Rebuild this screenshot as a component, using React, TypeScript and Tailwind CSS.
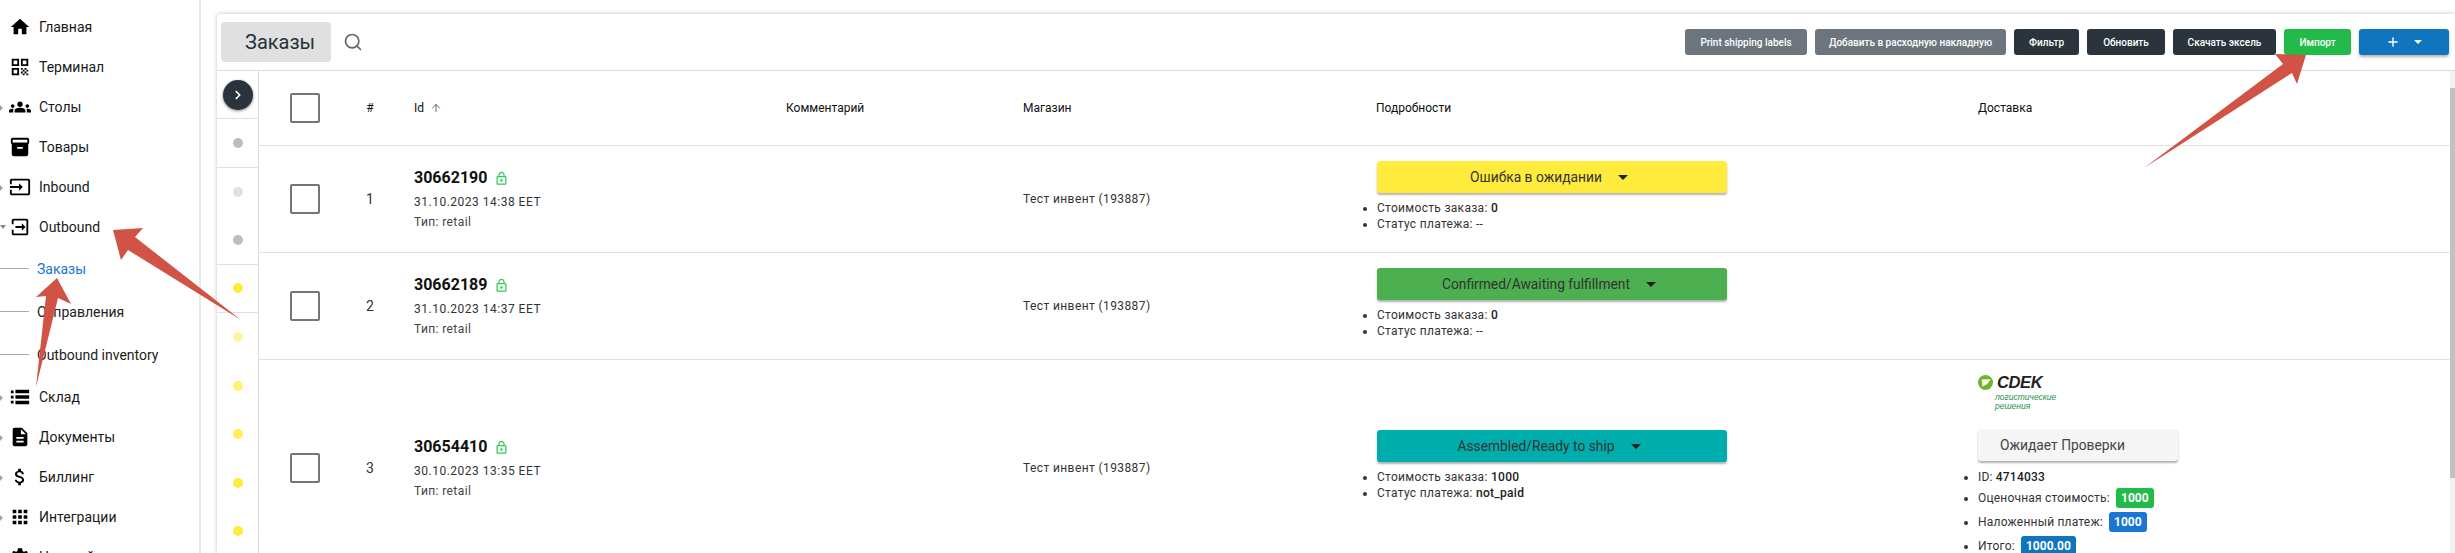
import { ArrowUp, ChevronRight, Search, Plus } from "lucide-react";
import type { ReactNode } from "react";

// иконки бокового меню
function Ico({ d }: { d: string }) {
  return (
    <svg viewBox="0 0 24 24" className="h-[22px] w-[22px] fill-black">
      <path d={d} />
    </svg>
  );
}

const icons = {
  home: "M10 20v-6h4v6h5v-8h3L12 3 2 12h3v8z",
  qr: "M3 11h8V3H3v8zm2-6h4v4H5V5zM3 21h8v-8H3v8zm2-6h4v4H5v-4zM13 3v8h8V3h-8zm6 6h-4V5h4v4zM13 13h2v2h-2zM15 15h2v2h-2zM13 17h2v2h-2zM15 19h2v2h-2zM17 17h2v2h-2zM19 19h2v2h-2zM17 13h2v2h-2zM19 15h2v2h-2z",
  groups: "M4 13c1.1 0 2-.9 2-2s-.9-2-2-2-2 .9-2 2 .9 2 2 2zm1.13 1.1C4.76 14.04 4.39 14 4 14c-.99 0-1.93.21-2.78.58C.48 14.9 0 15.62 0 16.43V18h4.5v-1.61c0-.83.23-1.61.63-2.29zM20 13c1.1 0 2-.9 2-2s-.9-2-2-2-2 .9-2 2 .9 2 2 2zm4 3.43c0-.81-.48-1.53-1.22-1.85C21.93 14.21 20.99 14 20 14c-.39 0-.76.04-1.13.1.4.68.63 1.46.63 2.29V18H24v-1.57zM16.24 13.65c-1.17-.52-2.61-.9-4.24-.9s-3.07.39-4.24.9C6.68 14.13 6 15.21 6 16.39V18h12v-1.61c0-1.18-.68-2.26-1.76-2.74zM12 12c1.66 0 3-1.34 3-3s-1.34-3-3-3-3 1.34-3 3 1.34 3 3 3z",
  archive: "M20 2H4c-1 0-2 .9-2 2v3.01c0 .72.43 1.34 1 1.69V20c0 1.1 1.1 2 2 2h14c.9 0 2-.9 2-2V8.7c.57-.35 1-.97 1-1.69V4c0-1.1-1-2-2-2zm-5 12H9v-2h6v2zm5-7H4V4h16v3z",
  login: "M21 3.01H3c-1.1 0-2 .9-2 2V9h2V4.99h18v14.03H3V15H1v4.01c0 1.1.9 1.98 2 1.98h18c1.1 0 2-.88 2-1.98v-14c0-1.11-.9-2-2-2zM11 16l4-4-4-4v3H1v2h10v3z",
  logout: "M5 3h14c1.1 0 2 .9 2 2v14c0 1.1-.9 2-2 2H5c-1.1 0-2-.9-2-2v-4h2v4h14V5H5v4H3V5c0-1.1.9-2 2-2zm9 5l4 4-4 4v-3H7v-2h7V8z",
  list: "M2 5h3v3H2zM7 4h15v4H7zM2 10.5h3v3H2zM7 10h15v4H7zM2 16h3v3H2zM7 16h15v4H7z",
  doc: "M14 2H6c-1.1 0-1.99.9-1.99 2L4 20c0 1.1.89 2 1.99 2H18c1.1 0 2-.9 2-2V8l-6-6zm2 16H8v-2h8v2zm0-4H8v-2h8v2zm-3-5V3.5L18.5 9H13z",
  money: "M11.8 10.9c-2.27-.59-3-1.2-3-2.15 0-1.09 1.01-1.85 2.7-1.85 1.78 0 2.44.85 2.5 2.1h2.21c-.07-1.72-1.12-3.3-3.21-3.81V3h-3v2.16c-1.94.42-3.5 1.68-3.5 3.61 0 2.31 1.91 3.46 4.7 4.13 2.5.6 3 1.48 3 2.41 0 .69-.49 1.79-2.7 1.79-2.06 0-2.87-.92-2.98-2.1h-2.2c.12 2.19 1.76 3.42 3.68 3.83V21h3v-2.15c1.95-.37 3.5-1.5 3.5-3.55 0-2.84-2.43-3.81-4.7-4.4z",
  apps: "M4 8h4V4H4v4zm6 12h4v-4h-4v4zm-6 0h4v-4H4v4zm0-6h4v-4H4v4zm6 0h4v-4h-4v4zm6-10v4h4V4h-4zm-6 4h4V4h-4v4zm6 6h4v-4h-4v4zm0 6h4v-4h-4v4z",
  gear: "M19.14 12.94c.04-.3.06-.61.06-.94 0-.32-.02-.64-.07-.94l2.03-1.58c.18-.14.23-.41.12-.61l-1.92-3.32c-.12-.22-.37-.29-.59-.22l-2.39.96c-.5-.38-1.03-.7-1.62-.94l-.36-2.54c-.04-.24-.24-.41-.48-.41h-3.84c-.24 0-.43.17-.47.41l-.36 2.54c-.59.24-1.13.57-1.62.94l-2.39-.96c-.22-.08-.47 0-.59.22L2.74 8.87c-.12.21-.08.47.12.61l2.03 1.58c-.05.3-.09.63-.09.94s.02.64.07.94l-2.03 1.58c-.18.14-.23.41-.12.61l1.92 3.32c.12.22.37.29.59.22l2.39-.96c.5.38 1.03.7 1.62.94l.36 2.54c.05.24.24.41.48.41h3.84c.24 0 .44-.17.47-.41l.36-2.54c.59-.24 1.13-.56 1.62-.94l2.39.96c.22.08.47 0 .59-.22l1.92-3.32c.12-.22.07-.47-.12-.61l-2.01-1.58z",
};

const lockPath = "M18 8h-1V6c0-2.76-2.24-5-5-5S7 3.24 7 6v2H6c-1.1 0-2 .9-2 2v10c0 1.1.9 2 2 2h12c1.1 0 2-.9 2-2V10c0-1.1-.9-2-2-2zM9 6c0-1.66 1.34-3 3-3s3 1.34 3 3v2H9V6zm9 14H6V10h12v10zm-6-3c1.1 0 2-.9 2-2s-.9-2-2-2-2 .9-2 2 .9 2 2 2z";

const menuTop = [
  { label: "Главная", icon: icons.home, caret: false },
  { label: "Терминал", icon: icons.qr, caret: false },
  { label: "Столы", icon: icons.groups, caret: true },
  { label: "Товары", icon: icons.archive, caret: false },
  { label: "Inbound", icon: icons.login, caret: true },
];
const menuBottom = [
  { label: "Склад", icon: icons.list },
  { label: "Документы", icon: icons.doc },
  { label: "Биллинг", icon: icons.money },
  { label: "Интеграции", icon: icons.apps },
  { label: "Настройки", icon: icons.gear },
];

function MenuItem({ label, icon, caret, down }: { label: string; icon: string; caret?: boolean; down?: boolean }) {
  return (
    <div className="relative flex h-10 items-center pl-[9px]">
      {caret && <span className="absolute left-0 top-[18px] h-0 w-0 border-y-[3px] border-l-[3px] border-y-transparent border-l-[#9aa5b1]" />}
      {down && <span className="absolute left-0 top-[18px] h-0 w-0 border-x-[3px] border-t-[4px] border-x-transparent border-t-[#8a8a8a]" />}
      <Ico d={icon} />
      <span className="ml-[8px] text-sm text-[#1a1a1a]">{label}</span>
    </div>
  );
}

function SubItem({ label, active }: { label: string; active?: boolean }) {
  return (
    <div className="flex h-[43px] items-center">
      <span className="h-px w-[29px] bg-[#aaa]" />
      <span className={`ml-[8px] text-sm ${active ? "text-[#1976d2]" : "text-[#222]"}`}>{label}</span>
    </div>
  );
}

function TopBtn({ children, tone, w }: { children: ReactNode; tone: string; w: string }) {
  return (
    <button className={`flex h-[26px] items-center justify-center rounded-[3px] text-[10px] font-medium text-white ${tone} ${w}`}>
      {children}
    </button>
  );
}

function Check() {
  return <div className="h-[30px] w-[30px] rounded-[2px] border-2 border-[#757575]" />;
}

function StatusBtn({ label, tone }: { label: string; tone: string }) {
  return (
    <div className={`flex h-8 w-[350px] items-center justify-center gap-[16px] pr-[6px] rounded-[3px] text-[13.8px] text-[#333] shadow-[0_2px_2px_rgba(0,0,0,0.3)] ${tone}`}>
      <span>{label}</span>
      <span className="h-0 w-0 border-x-[5px] border-t-[5px] border-x-transparent border-t-[#222]" />
    </div>
  );
}

function Info({ cost, pay }: { cost: string; pay: string }) {
  return (
    <ul className="mt-[7px] list-disc pb-[5px] text-xs leading-4 tracking-[0.3px] text-[#333]">
      <li>Стоимость заказа: <b className="font-medium text-[#222]">{cost}</b></li>
      <li>Статус платежа: {pay === "--" ? pay : <b className="font-medium text-[#222]">{pay}</b>}</li>
    </ul>
  );
}

function OrderCell({ id, date }: { id: string; date: string }) {
  return (
    <div>
      <div className="flex items-center gap-[7px]">
        <span className="text-base font-bold leading-5 text-[#111]">{id}</span>
        <svg viewBox="0 0 24 24" className="h-[15px] w-[15px] fill-[#2ecc55]"><path d={lockPath} /></svg>
      </div>
      <div className="mt-[6px] text-xs leading-4 tracking-[0.5px] text-[#333]">{date}</div>
      <div className="mt-1 text-xs leading-4 tracking-[0.4px] text-[#444]">Тип: retail</div>
    </div>
  );
}

function Row({ n, id, date, h, status, children }: { n: number; id: string; date: string; h: string; status: ReactNode; children?: ReactNode }) {
  return (
    <div className={`flex items-center border-b border-[#e0e0e0] ${h}`}>
      <div className="w-[91px] pl-[31px]"><Check /></div>
      <div className="w-[40px] text-center text-sm text-[#333]">{n}</div>
      <div className="w-[396px] pl-[24px]"><OrderCell id={id} date={date} /></div>
      <div className="w-[237px]" />
      <div className="w-[353px] text-xs tracking-[0.4px] text-[#333]">Тест инвент (193887)</div>
      <div className="w-[602px] pl-px">{status}</div>
      <div className="min-w-0 flex-1 self-start">{children}</div>
    </div>
  );
}

// логотип перевозчика
function CdekLogo() {
  return (
    <div className="h-[35px] w-[80px]">
      <div className="flex items-center gap-[4px]">
        <svg viewBox="0 0 16 16" className="h-[15px] w-[15px]">
          <circle cx="8" cy="8" r="8" fill="#6cb52d" />
          <path d="M4 4.5h9.5l-3.5 5-5.5 3z" fill="#f2f7e6" />
        </svg>
        <span className="font-['Liberation_Sans',sans-serif] text-[16.5px] leading-[15px] font-bold tracking-[-0.4px] text-[#222] italic">СDEK</span>
      </div>
      <div className="mt-[3px] pl-[17px] font-['Liberation_Sans',sans-serif] text-[8.5px] leading-[9px] text-[#1f8f4a] italic">
        <div>логистические</div>
        <div>решения</div>
      </div>
    </div>
  );
}

function Badge({ tone, children }: { tone: string; children: ReactNode }) {
  return (
    <span className={`ml-[3px] inline-flex h-5 items-center rounded-[3px] px-[5px] text-xs font-bold tracking-normal text-white ${tone}`}>{children}</span>
  );
}

function Delivery() {
  return (
    <div className="pt-[15px]">
      <CdekLogo />
      <div className="mt-[19px] flex h-8 w-[200px] items-center rounded-[3px] bg-[#f5f5f5] pl-[22px] text-[13.8px] text-[#444] shadow-[0_2px_2px_rgba(0,0,0,0.3)]">Ожидает Проверки</div>
      <ul className="mt-[8px] list-disc text-xs tracking-[0.2px] text-[#333]">
        <li className="h-4 leading-4">ID: <b className="font-medium text-[#222]">4714033</b></li>
        <li className="mt-[3px] h-5 leading-5">Оценочная стоимость: <Badge tone="bg-[#22bb4a]">1000</Badge></li>
        <li className="mt-[4px] h-5 leading-5">Наложенный платеж: <Badge tone="bg-[#1976d2]">1000</Badge></li>
        <li className="mt-[4px] h-5 leading-5">Итого: <Badge tone="bg-[#0f75bd]">1000.00</Badge></li>
      </ul>
    </div>
  );
}

export default function App() {
  const dots = ["#bdbdbd", "#e0e0e0", "#bdbdbd", "#ffeb3b", "#fff59d", "#fff176", "#ffee58", "#ffeb3b", "#ffeb3b", "#ffeb3b"];
  const dotLines = [true, false, true, true, false, false, false, false, false, false];

  return (
    <div className="relative flex h-[553px] w-[2455px] overflow-hidden bg-white font-['Roboto',sans-serif]">
      {/* боковое меню */}
      <aside className="w-[201px] shrink-0 border-r-2 border-[#e8e8e8] pt-[7px]">
        {menuTop.map((m) => <MenuItem key={m.label} {...m} />)}
        <MenuItem label="Outbound" icon={icons.logout} down />
        <SubItem label="Заказы" active />
        <SubItem label="Отправления" />
        <SubItem label="Outbound inventory" />
        <div className="h-[1px]" />
        {menuBottom.map((m) => <MenuItem key={m.label} label={m.label} icon={m.icon} caret />)}
      </aside>

      {/* карточка с таблицей */}
      <main className="ml-[16px] mt-[14px] min-w-0 flex-1 rounded-tl-[4px] shadow-[0_0_4px_rgba(0,0,0,0.25)]">
        <div className="flex h-[57px] items-center border-b border-[#d5dce6] pl-1 pr-[6px]">
          <div className="flex h-10 w-[110px] items-center rounded-[4px] bg-[#e0e0e0] pl-[24px] text-xl text-[#263238]">Заказы</div>
          <Search className="ml-[12px] h-[20px] w-[20px] text-[#666]" strokeWidth={2} />
          <div className="ml-auto flex items-center gap-2">
            <TopBtn tone="bg-[#6c757d]" w="w-[122px]">Print shipping labels</TopBtn>
            <TopBtn tone="bg-[#6c757d]" w="w-[191px]">Добавить в расходную накладную</TopBtn>
            <TopBtn tone="bg-[#2b343d]" w="w-[65px]">Фильтр</TopBtn>
            <TopBtn tone="bg-[#2b343d]" w="w-[78px]">Обновить</TopBtn>
            <TopBtn tone="bg-[#2b343d]" w="w-[103px]">Скачать эксель</TopBtn>
            <TopBtn tone="bg-[#22bb4a]" w="w-[67px]">Импорт</TopBtn>
            <button className="flex h-[26px] w-[90px] items-center justify-center gap-[14px] rounded-[3px] bg-[#0f75bd] text-white shadow-[0_2px_3px_rgba(0,0,0,0.3)]">
              <Plus className="h-[14px] w-[14px]" strokeWidth={2.5} />
              <span className="h-0 w-0 border-x-[4px] border-t-[4px] border-x-transparent border-t-white" />
            </button>
          </div>
        </div>

        <div className="flex">
          {/* колонка со статусами */}
          <div className="w-[42px] shrink-0 border-r border-[#d5dce6]">
            <div className="flex h-[48px] items-start justify-center border-b border-[#e0e0e0] pt-[9px]">
              <div className="flex h-[30px] w-[30px] items-center justify-center rounded-full bg-[#2b343d] shadow-[0_1px_3px_rgba(0,0,0,0.5)]">
                <ChevronRight className="h-[14px] w-[14px] text-white" strokeWidth={3} />
              </div>
            </div>
            {dots.map((c, i) => (
              <div key={i} className={`flex h-[48.5px] items-center justify-center ${dotLines[i] ? "border-b border-[#e0e0e0]" : ""}`}>
                <span className="h-[10px] w-[10px] rounded-full" style={{ backgroundColor: c }} />
              </div>
            ))}
          </div>

          {/* таблица заказов */}
          <div className="min-w-0 flex-1">
            <div className="flex h-[75px] items-center border-b border-[#e0e0e0] text-xs text-[#111]">
              <div className="w-[91px] pl-[31px]"><Check /></div>
              <div className="w-[40px] text-center">#</div>
              <div className="flex w-[396px] items-center gap-[6px] pl-[24px]">Id <ArrowUp className="h-[12px] w-[12px] text-[#666]" /></div>
              <div className="w-[237px]">Комментарий</div>
              <div className="w-[353px]">Магазин</div>
              <div className="w-[602px]">Подробности</div>
              <div>Доставка</div>
            </div>
            <Row n={1} id="30662190" date="31.10.2023 14:38 EET" h="h-[107px]" status={<><StatusBtn label="Ошибка в ожидании" tone="bg-[#ffeb3b]" /><Info cost="0" pay="--" /></>} />
            <Row n={2} id="30662189" date="31.10.2023 14:37 EET" h="h-[107px]" status={<><StatusBtn label="Confirmed/Awaiting fulfillment" tone="bg-[#4caf50]" /><Info cost="0" pay="--" /></>} />
            <Row n={3} id="30654410" date="30.10.2023 13:35 EET" h="h-[217px]" status={<><StatusBtn label="Assembled/Ready to ship" tone="bg-[#00adad]" /><Info cost="1000" pay="not_paid" /></>}>
              <Delivery />
            </Row>
          </div>

          {/* полоса прокрутки */}
          <div className="w-[5px] shrink-0 bg-[#f1f1f1] pt-[17px]">
            <div className="h-[390px] bg-[#c1c1c1]" />
          </div>
        </div>
      </main>

      {/* красные стрелки поверх скриншота */}
      <svg className="pointer-events-none absolute left-0 top-0 h-[553px] w-[2455px]" viewBox="0 0 2455 553">
        <polygon fill="#d05345" points="113,230 143,228 135,237 241,320 128,250 121,260" />
        <polygon fill="#d05345" points="57,278 71,304 58,298 36,387 46,296 36,297" />
        <polygon fill="#d05345" points="2275,54 2306,55 2297,84 2292,73 2144,168 2283,64" />
      </svg>
    </div>
  );
}
